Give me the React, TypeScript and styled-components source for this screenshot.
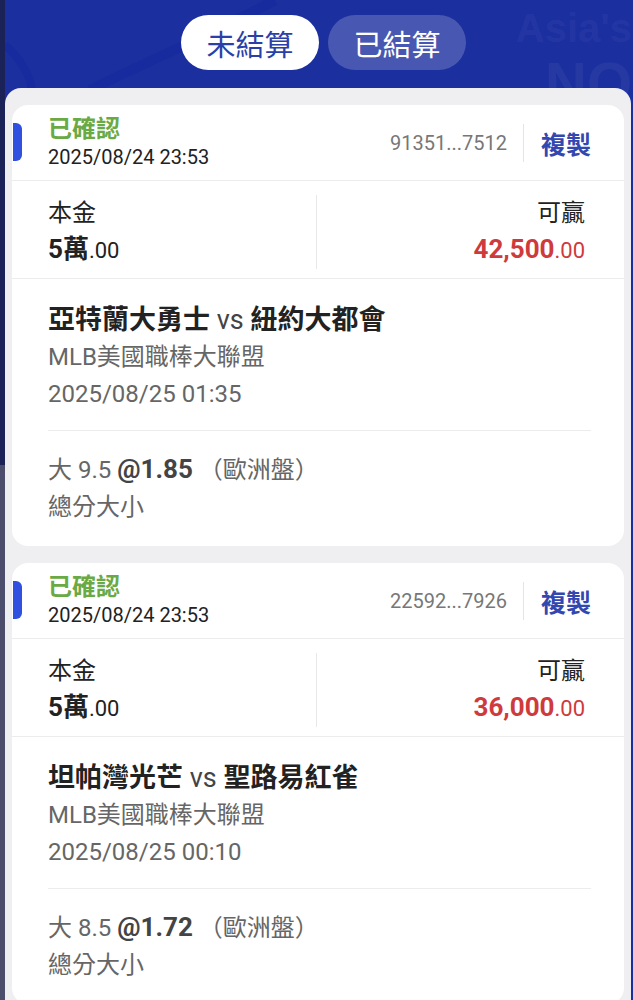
import styled, { createGlobalStyle } from 'styled-components';

const GlobalStyle = createGlobalStyle`
  html, body {
    margin: 0;
    padding: 0;
    background: #1b2f9f;
    font-family: Roboto, "Noto Sans CJK TC", "Noto Sans", sans-serif;
  }
`;

const Page = styled.div`
  display: flex;
  width: 633px;
  min-height: 1000px;
  overflow: hidden;`;

const LeftStrip = styled.div`
  width: 5px;
  flex: none;
  background: linear-gradient(to bottom, #1a2258 0, #1a2258 465px, #4c4c6c 465px, #4c4c6c 100%);`;

const Main = styled.div`
  flex: 1;
  position: relative;
  background: #1b2f9f;
  display: flex;
  flex-direction: column;`;

const Deco = styled.div`
  position: absolute;
  top: 0;
  right: 1px;
  text-align: right;
  font-family: "Liberation Sans", sans-serif;
  font-weight: 700;
  color: rgba(255, 255, 255, 0.05);
  line-height: 1;
  pointer-events: none;`;

const DecoSmall = styled.div`
  font-size: 40px;
  margin-top: 8px;`;

const DecoBig = styled.div`
  font-size: 58px;
  margin-top: 6px;`;

const Swoosh = styled.svg`
  position: absolute;
  left: 0;
  top: 0;
  pointer-events: none;`;

const Tabs = styled.div`
  display: flex;
  justify-content: center;
  gap: 9px;
  padding: 15px 0 18px 9px;
  position: relative;`;

const Tab = styled.div<{ $active?: boolean }>`
  width: 138px;
  height: 55px;
  border-radius: 28px;
  display: flex;
  align-items: center;
  justify-content: center;
  font-size: 29px;
  background: ${p => (p.$active ? '#ffffff' : 'rgba(255,255,255,0.2)')};
  color: ${p => (p.$active ? '#2a3fa8' : '#ffffff')};`;

const Sheet = styled.div`
  flex: 1;
  background: #efeff1;
  border-radius: 16px 16px 0 0;
  margin-right: 2px;
  padding: 17px 7px 0;
  display: flex;
  flex-direction: column;
  gap: 17px;
  position: relative;`;

const Card = styled.div`
  background: #ffffff;
  border-radius: 16px;
  position: relative;`;

const Indicator = styled.div`
  position: absolute;
  left: 1px;
  top: 18px;
  width: 9px;
  height: 38px;
  border-radius: 0 6px 6px 0;
  background: #3050e0;`;

const Header = styled.div`
  display: flex;
  align-items: center;
  padding: 10px 33px 9px 36px;
  border-bottom: 1px solid #ececec;`;

const HeaderLeft = styled.div`
  flex: 1;
  display: flex;
  flex-direction: column;`;

const Status = styled.div`
  font-size: 24px;
  line-height: 28px;
  font-weight: 700;
  color: #6aaa45;`;

const Stamp = styled.div`
  font-size: 20px;
  line-height: 28px;
  color: #222;`;

const OrderId = styled.div`
  font-size: 20px;
  color: #777;
  padding-right: 16px;
  border-right: 1px solid #e4e4e4;
  line-height: 38px;`;

const Copy = styled.div`
  font-size: 25px;
  font-weight: 700;
  color: #3347b0;
  padding-left: 17px;`;

const Amounts = styled.div`
  display: flex;
  border-bottom: 1px solid #ececec;
  padding: 14px 0 9px;`;

const AmountCol = styled.div<{ $right?: boolean }>`
  flex: 1;
  display: flex;
  flex-direction: column;
  align-items: ${p => (p.$right ? 'flex-end' : 'flex-start')};
  padding: ${p => (p.$right ? '0 39px 0 0' : '0 0 0 36px')};
  border-left: ${p => (p.$right ? '1px solid #e8e8e8' : 'none')};`;

const Label = styled.div`
  font-size: 24px;
  line-height: 36px;
  color: #222;`;

const Money = styled.div<{ $red?: boolean }>`
  font-size: 26px;
  line-height: 36px;
  font-weight: 700;
  color: ${p => (p.$red ? '#cf3a3c' : '#222')};`;

const Cents = styled.span`
  font-size: 22px;
  font-weight: 400;`;

const Match = styled.div`
  padding: 22px 33px 17px 36px;`;

const Teams = styled.div`
  font-size: 27px;
  line-height: 38px;
  font-weight: 700;
  color: #222;`;

const Vs = styled.span`
  font-weight: 400;
  color: #444;`;

const SubLine = styled.div`
  font-size: 24px;
  line-height: 37px;
  color: #666;`;

const Bet = styled.div`
  margin: 0 33px 0 36px;
  border-top: 1px solid #ececec;
  padding: 20px 0 20px;`;

const Odds = styled.span`
  font-size: 26px;
  font-weight: 700;
  color: #444;`;

type Ticket = {
  stamp: string;
  id: string;
  stake: string;
  win: string;
  home: string;
  away: string;
  kickoff: string;
  line: string;
  odds: string;
};

const tickets: Ticket[] = [
  {
    stamp: '2025/08/24 23:53',
    id: '91351...7512',
    stake: '5萬',
    win: '42,500',
    home: '亞特蘭大勇士',
    away: '紐約大都會',
    kickoff: '2025/08/25 01:35',
    line: '9.5',
    odds: '1.85',
  },
  {
    stamp: '2025/08/24 23:53',
    id: '22592...7926',
    stake: '5萬',
    win: '36,000',
    home: '坦帕灣光芒',
    away: '聖路易紅雀',
    kickoff: '2025/08/25 00:10',
    line: '8.5',
    odds: '1.72',
  },
];

function TicketCard({ t }: { t: Ticket }) {
  return (
    <Card>
      <Indicator />
      <Header>
        <HeaderLeft>
          <Status>已確認</Status>
          <Stamp>{t.stamp}</Stamp>
        </HeaderLeft>
        <OrderId>{t.id}</OrderId>
        <Copy>複製</Copy>
      </Header>
      <Amounts>
        <AmountCol>
          <Label>本金</Label>
          <Money>{t.stake}<Cents>.00</Cents></Money>
        </AmountCol>
        <AmountCol $right>
          <Label>可贏</Label>
          <Money $red>{t.win}<Cents>.00</Cents></Money>
        </AmountCol>
      </Amounts>
      <Match>
        <Teams>{t.home} <Vs>vs</Vs> {t.away}</Teams>
        <SubLine>MLB美國職棒大聯盟</SubLine>
        <SubLine>{t.kickoff}</SubLine>
      </Match>
      <Bet>
        <SubLine>大 {t.line} <Odds>@{t.odds}</Odds> （歐洲盤）</SubLine>
        <SubLine>總分大小</SubLine>
      </Bet>
    </Card>
  );
}

function App() {
  return (
    <Page>
      <GlobalStyle />
      <LeftStrip />
      <Main>
        <Swoosh width="628" height="90" viewBox="0 0 628 90">
          <path d="M0 45 C 15 58, 25 75, 27 90" stroke="rgba(20,40,160,0.5)" strokeWidth="8" fill="none" />
          <path d="M85 90 C 140 62, 200 38, 270 0" stroke="rgba(20,40,160,0.45)" strokeWidth="10" fill="none" />
        </Swoosh>
        <Deco>
          <DecoSmall>Asia's</DecoSmall>
          <DecoBig>NO</DecoBig>
        </Deco>
        <Tabs>
          <Tab $active>未結算</Tab>
          <Tab>已結算</Tab>
        </Tabs>
        <Sheet>
          {tickets.map(t => (
            <TicketCard key={t.id} t={t} />
          ))}
        </Sheet>
      </Main>
    </Page>
  );
}

export default App;
